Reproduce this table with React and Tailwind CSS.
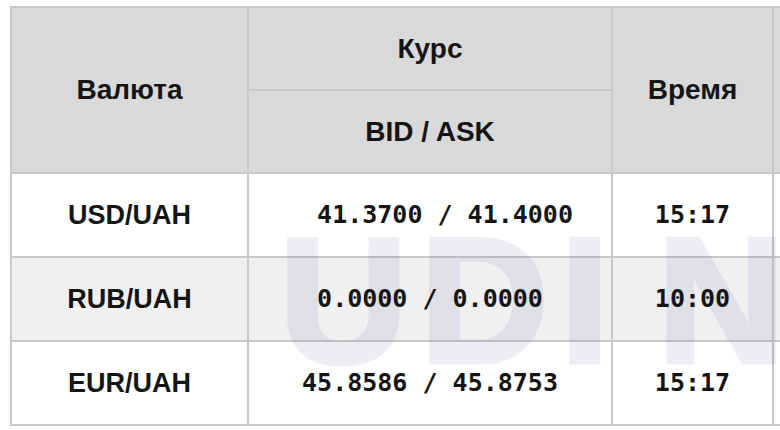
const rows = [
  { pair: "USD/UAH", rate: "  41.3700 / 41.4000", time: "15:17" },
  { pair: "RUB/UAH", rate: "0.0000 / 0.0000", time: "10:00" },
  { pair: "EUR/UAH", rate: "45.8586 / 45.8753", time: "15:17" },
];

const sans = "font-['Liberation_Sans',Arial,sans-serif]";
const mono = "font-['DejaVu_Sans_Mono','Liberation_Mono',monospace]";

export default function App() {
  return (
    <div className="relative w-[780px] h-[430px] overflow-hidden bg-white">
      <div className="relative pt-[6px] pl-[10px]">
        <table className="border-collapse table-fixed w-[900px] text-[#151515]">
          <colgroup>
            <col className="w-[237px]" />
            <col className="w-[364px]" />
            <col className="w-[161px]" />
            <col className="w-[138px]" />
          </colgroup>
          <thead>
            <tr className="h-[83px]">
              <th rowSpan={2} className={`border-2 border-[#c8c8c8] bg-[#d9d9d9] text-[28px] font-bold ${sans}`}>
                Валюта
              </th>
              <th className={`border-2 border-[#c8c8c8] bg-[#d9d9d9] text-[28px] font-bold ${sans}`}>Курс</th>
              <th rowSpan={2} className={`border-2 border-[#c8c8c8] bg-[#d9d9d9] text-[28px] font-bold ${sans}`}>
                Время
              </th>
              <th rowSpan={2} className="border-2 border-[#c8c8c8] bg-[#d9d9d9]" />
            </tr>
            <tr className="h-[83px]">
              <th className={`border-2 border-[#c8c8c8] bg-[#d9d9d9] text-[28px] font-bold ${sans}`}>BID / ASK</th>
            </tr>
          </thead>
          <tbody>
            {rows.map((r, i) => (
              <tr key={r.pair} className={`h-[84px] ${i === 1 ? "bg-[#f0f0f0]" : "bg-white"}`}>
                <td className={`border-2 border-[#c8c8c8] text-center text-[27px] font-bold ${sans}`}>
                  <span className="relative z-10">{r.pair}</span>
                </td>
                <td className={`border-2 border-[#c8c8c8] text-center text-[25px] font-bold whitespace-pre ${mono}`}>
                  <span className="relative z-10">{r.rate}</span>
                </td>
                <td className={`border-2 border-[#c8c8c8] text-center text-[25px] font-bold ${mono}`}>
                  <span className="relative z-10">{r.time}</span>
                </td>
                <td className="border-2 border-[#c8c8c8]" />
              </tr>
            ))}
          </tbody>
        </table>

        {/* watermark */}
        <div
          aria-hidden="true"
          className={`pointer-events-none select-none absolute z-0 left-[279px] top-[212px] flex text-[178px] leading-none font-bold text-[#3c4a8c] opacity-[0.09] [-webkit-text-stroke:5px_#3c4a8c] ${sans}`}
        >
          <span className="w-[141px]">U</span>
          <span className="w-[140px]">D</span>
          <span className="w-[97px]">I</span>
          <span>N</span>
        </div>
      </div>
    </div>
  );
}
